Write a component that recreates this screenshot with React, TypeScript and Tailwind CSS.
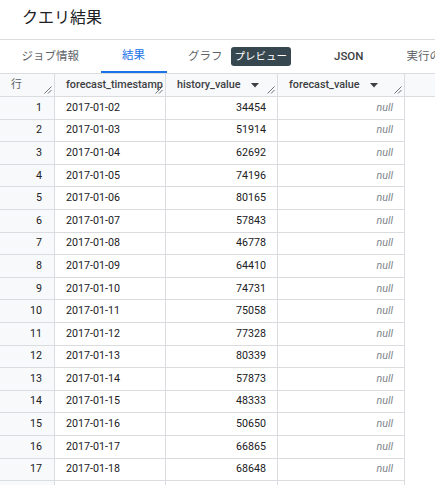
import React from 'react';

const rows: [string, number][] = [
  ['2017-01-02', 34454],
  ['2017-01-03', 51914],
  ['2017-01-04', 62692],
  ['2017-01-05', 74196],
  ['2017-01-06', 80165],
  ['2017-01-07', 57843],
  ['2017-01-08', 46778],
  ['2017-01-09', 64410],
  ['2017-01-10', 74731],
  ['2017-01-11', 75058],
  ['2017-01-12', 77328],
  ['2017-01-13', 80339],
  ['2017-01-14', 57873],
  ['2017-01-15', 48333],
  ['2017-01-16', 50650],
  ['2017-01-17', 66865],
  ['2017-01-18', 68648],
];

const ResizeHandle = () => (
  <svg className="absolute right-[2px] bottom-[2px]" width="8" height="8" viewBox="0 0 8 8">
    <path d="M7.5 0.5 L0.5 7.5 M7.5 4 L4 7.5" stroke="#5f6368" strokeWidth="0.9" fill="none" />
  </svg>
);

const SortArrow = () => (
  <svg width="8" height="5" viewBox="0 0 8 5" className="ml-[10px] shrink-0">
    <path d="M0 0 L8 0 L4 4.5 Z" fill="#3c4043" />
  </svg>
);

const tabs = [
  { label: 'ジョブ情報' },
  { label: '結果', active: true },
  { label: 'グラフ', badge: 'プレビュー' },
  { label: 'JSON', latin: true },
  { label: '実行の詳細' },
];

export default function App() {
  return (
    <div
      className="w-[435px] h-[485px] overflow-hidden bg-white"
      style={{ fontFamily: 'Roboto, "Noto Sans CJK JP", sans-serif' }}
    >
      {/* title */}
      <div className="h-[39px] flex items-center pl-[22px] pb-[4px] text-[16px] text-[#202124]">
        クエリ結果
      </div>

      {/* tabs */}
      <div className="border-t border-[#dadce0] h-[34px] flex whitespace-nowrap">
        {tabs.map((t) => (
          <div
            key={t.label}
            className={
              'flex items-center px-[21.5px] text-[11.5px] shrink-0 ' +
              (t.active
                ? 'text-[#1a73e8] border-b-2 border-[#1a73e8]'
                : t.latin
                  ? 'text-[#3c4043] font-medium'
                  : 'text-[#5f6368]')
            }
          >
            <span>{t.label}</span>
            {t.badge && (
              <span className="ml-[8px] h-[19px] px-[4px] flex items-center rounded-[3px] bg-[#37474f] text-white text-[10.5px]">
                {t.badge}
              </span>
            )}
          </div>
        ))}
      </div>

      {/* header */}
      <div className="h-[24px] border-t border-b border-[#dadce0] bg-[#f8f9fa] flex text-[10.8px] font-medium text-[#3c4043]">
        <div className="relative w-[55px] border-r border-[#dadce0] flex items-center pl-[11px] font-normal text-[#5f6368]">
          行
          <ResizeHandle />
        </div>
        <div className="relative w-[111px] border-r border-[#dadce0] flex items-center pl-[11px] overflow-hidden whitespace-nowrap">
          forecast_timestamp
          <ResizeHandle />
        </div>
        <div className="relative w-[112px] border-r border-[#dadce0] flex items-center pl-[11px] whitespace-nowrap">
          history_value
          <SortArrow />
          <ResizeHandle />
        </div>
        <div className="relative w-[127px] border-r border-[#dadce0] flex items-center pl-[11px] whitespace-nowrap">
          forecast_value
          <SortArrow />
          <ResizeHandle />
        </div>
      </div>

      {/* body */}
      <div className="w-[405px] text-[10.7px] text-[#202124]">
        {rows.map(([date, value], i) => (
          <div key={date} className="h-[22.6px] flex border-b border-[#dadce0]">
            <div className="w-[55px] border-r border-[#dadce0] bg-[#f8f9fa] flex items-center justify-end pr-[12px]">
              {i + 1}
            </div>
            <div className="w-[111px] border-r border-[#dadce0] flex items-center pl-[11px]">
              {date}
            </div>
            <div className="w-[112px] border-r border-[#dadce0] flex items-center justify-end pr-[11px]">
              {value}
            </div>
            <div className="w-[127px] border-r border-[#dadce0] flex items-center justify-end pr-[11px] italic text-[#80868b]">
              null
            </div>
          </div>
        ))}
        {/* next row, cut off by the window */}
        <div className="h-[22.6px] flex">
          <div className="w-[55px] border-r border-[#dadce0] bg-[#f8f9fa]" />
          <div className="w-[111px] border-r border-[#dadce0]" />
          <div className="w-[112px] border-r border-[#dadce0]" />
          <div className="w-[127px] border-r border-[#dadce0]" />
        </div>
      </div>
    </div>
  );
}
